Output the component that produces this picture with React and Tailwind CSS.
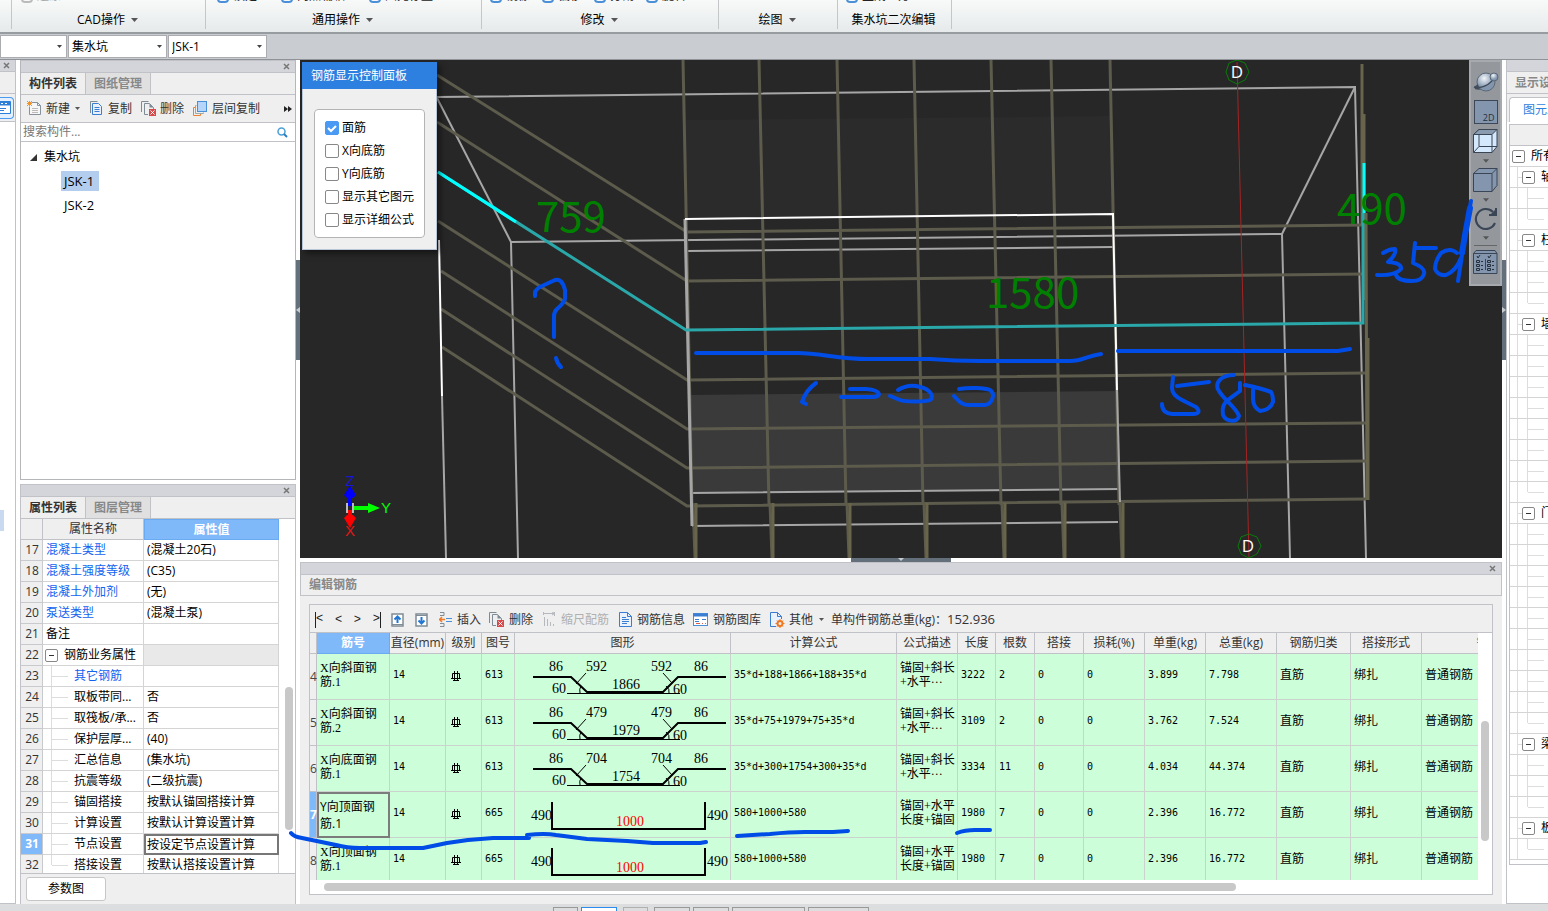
/**
 * App.jsx
 * Rebar modelling workspace: ribbon, component selectors, component and
 * property panels, 3D view, rebar editing grid and the display settings tree.
 */

const RIBBON_GROUPS = [
  { label: "", width: "w-[12px]", pad: "pl-0", tools: [] },
  { label: "CAD操作", width: "w-[194px]", pad: "pl-[9px]", tools: ["还原"], disabled: true, menu: true },
  { label: "通用操作", width: "w-[276px]", pad: "pl-[11px]", tools: ["锁定", "两点辅轴", "图元存盘"], spread: true, menu: true },
  { label: "修改", width: "w-[237px]", pad: "pl-[8px]", tools: ["镜像", "偏移", "分割", "旋转"], menu: true },
  { label: "绘图", width: "w-[119px]", pad: "pl-0", tools: [], menu: true },
  { label: "集水坑二次编辑", width: "w-[114px]", pad: "pl-[8px]", tools: ["生成土方"] },
];

const PROPERTIES = [
  { no: 17, name: "混凝土类型", value: "(混凝土20石)", link: true },
  { no: 18, name: "混凝土强度等级", value: "(C35)", link: true },
  { no: 19, name: "混凝土外加剂", value: "(无)", link: true },
  { no: 20, name: "泵送类型", value: "(混凝土泵)", link: true },
  { no: 21, name: "备注", value: "" },
  { no: 22, name: "钢筋业务属性", value: "", group: true },
  { no: 23, name: "其它钢筋", value: "", link: true, child: true },
  { no: 24, name: "取板带同...", value: "否", child: true },
  { no: 25, name: "取筏板/承...", value: "否", child: true },
  { no: 26, name: "保护层厚...", value: "(40)", child: true },
  { no: 27, name: "汇总信息", value: "(集水坑)", child: true },
  { no: 28, name: "抗震等级", value: "(二级抗震)", child: true },
  { no: 29, name: "锚固搭接", value: "按默认锚固搭接计算", child: true },
  { no: 30, name: "计算设置", value: "按默认计算设置计算", child: true },
  { no: 31, name: "节点设置", value: "按设定节点设置计算", child: true, active: true },
  { no: 32, name: "搭接设置", value: "按默认搭接设置计算", child: true, last: true },
];

const REBAR_COLUMNS = [
  { title: "", width: "w-[7px]" },
  { title: "筋号", width: "w-[73px]" },
  { title: "直径(mm)", width: "w-[56px]" },
  { title: "级别", width: "w-[36px]" },
  { title: "图号", width: "w-[33px]" },
  { title: "图形", width: "w-[216px]" },
  { title: "计算公式", width: "w-[166px]" },
  { title: "公式描述", width: "w-[61px]" },
  { title: "长度", width: "w-[38px]" },
  { title: "根数", width: "w-[39px]" },
  { title: "搭接", width: "w-[49px]" },
  { title: "损耗(%)", width: "w-[61px]" },
  { title: "单重(kg)", width: "w-[61px]" },
  { title: "总重(kg)", width: "w-[71px]" },
  { title: "钢筋归类", width: "w-[74px]" },
  { title: "搭接形式", width: "w-[71px]" },
  { title: "钢筋类型", width: "w-[158px]" },
];

const REBARS = [
  { no: 4, name: "X向斜面钢\n筋.1", shape: "613", side: "592", mid: "1866", formula: "35*d+188+1866+188+35*d", desc: "锚固+斜长\n+水平···", length: 3222, count: 2, unit: "3.899", total: "7.798" },
  { no: 5, name: "X向斜面钢\n筋.2", shape: "613", side: "479", mid: "1979", formula: "35*d+75+1979+75+35*d", desc: "锚固+斜长\n+水平···", length: 3109, count: 2, unit: "3.762", total: "7.524" },
  { no: 6, name: "X向底面钢\n筋.1", shape: "613", side: "704", mid: "1754", formula: "35*d+300+1754+300+35*d", desc: "锚固+斜长\n+水平···", length: 3334, count: 11, unit: "4.034", total: "44.374" },
  { no: 7, name: "Y向顶面钢\n筋.1", shape: "665", side: "490", mid: "1000", formula: "580+1000+580", desc: "锚固+水平\n长度+锚固", length: 1980, count: 7, unit: "2.396", total: "16.772", active: true },
  { no: 8, name: "X向顶面钢\n筋.1", shape: "665", side: "490", mid: "1000", formula: "580+1000+580", desc: "锚固+水平\n长度+锚固", length: 1980, count: 7, unit: "2.396", total: "16.772" },
];

const DISPLAY_GROUPS = [
  { name: "轴线", children: 2 },
  { name: "柱", children: 3 },
  { name: "墙", children: 8 },
  { name: "门窗洞", children: 10 },
  { name: "梁", children: 3 },
  { name: "板", children: 1 },
];

const DISPLAY_OPTIONS = [
  { label: "面筋", checked: true },
  { label: "X向底筋" },
  { label: "Y向底筋" },
  { label: "显示其它图元" },
  { label: "显示详细公式" },
];

/* ── Small shared pieces ── */

function Caret({ className = "" }) {
  return (
    <svg width="7" height="4" viewBox="0 0 7 4" className={className} aria-hidden="true">
      <path d="M0 0h7L3.5 4z" fill="#555" />
    </svg>
  );
}

function PanelBar() {
  return (
    <div className="flex h-3 shrink-0 items-center justify-end border-b border-[#c0c2c8] bg-[#d4d5da] pr-[5px]">
      <button aria-label="关闭">
        <svg width="7" height="7" viewBox="0 0 7 7">
          <path d="M1 1l5 5M6 1l-5 5" stroke="#777" strokeWidth="1.5" />
        </svg>
      </button>
    </div>
  );
}

function Tabs({ items }) {
  return (
    <div className="flex h-[22px] shrink-0 border-b border-[#c0c2c8] bg-[#efefef]" role="tablist">
      {items.map((item, i) => (
        <button
          key={item}
          role="tab"
          aria-selected={i === 0}
          className={[
            "w-[65px] border-r border-[#c0c2c8] font-bold leading-[22px]",
            i === 0 ? "text-[#333]" : "bg-[#e0e0e0] text-[#888]",
          ].join(" ")}
        >
          {item}
        </button>
      ))}
    </div>
  );
}

function Expander() {
  return (
    <button
      aria-label="折叠"
      className="flex h-[13px] w-[13px] shrink-0 items-center justify-center rounded-[2px] border border-[#888] bg-white"
    >
      <span className="h-px w-[5px] bg-[#333]" />
    </button>
  );
}

/* ── Toolbar icons ── */

function NewIcon() {
  return (
    <svg width="15" height="15" viewBox="0 0 15 15">
      <path d="M4.5 1.5h6l3 3v9h-11v-8" fill="#f7f7f7" stroke="#87929c" />
      <path d="M10.5 1.5v3h3" fill="none" stroke="#87929c" />
      <path d="M5 7.5h6M5 9.5h6M5 11.5h6" stroke="#bbb" />
      <path d="M0 0l5 5M5 0L0 5M2.500 0v5M0 2.500h5" stroke="#f0932b" />
    </svg>
  );
}

function CopyIcon() {
  return (
    <svg width="13" height="15" viewBox="0 0 13 15">
      <path d="M.5 12V.5h7" fill="none" stroke="#7f8c96" />
      <path d="M2.500 2.500h6l3 3v8h-9z" fill="#e8f1fc" stroke="#3b7dd0" />
      <path d="M4.500 6.500h5M4.500 8.500h5M4.500 10.500h5" stroke="#3b7dd0" />
    </svg>
  );
}

function DeleteIcon() {
  return (
    <svg width="15" height="15" viewBox="0 0 15 15">
      <path d="M.5 11V.5h7" fill="none" stroke="#7f8c96" />
      <path d="M7 13.500H3.500v-11h5l4 4V8" fill="none" stroke="#7f8c96" />
      <path d="M8.500 2.500v4h4z" fill="#7f8c96" />
      <rect x="8" y="8" width="7" height="7" fill="#d9484a" />
      <path d="M9.500 9.500l4 4M13.500 9.500l-4 4" stroke="#fff" />
    </svg>
  );
}

function LayerCopyIcon() {
  return (
    <svg width="15" height="15" viewBox="0 0 15 15">
      <path d="M2.500 6.500h-2v8h7v-2" fill="none" stroke="#f08030" />
      <path d="M3.500 4.500h-1v8h8v-1" fill="none" stroke="#9aa" />
      <rect x="4.500" y=".5" width="9" height="10" fill="#b5d5fb" stroke="#4a90d9" />
    </svg>
  );
}

function MoveIcon({ down }) {
  return (
    <svg width="13" height="14" viewBox="0 0 13 14">
      <rect x="1" y="1" width="11" height="12" fill="#fff" stroke="#7f8c96" strokeWidth="1.500" />
      <path d={down ? "M1 2.500h11" : "M1 11.500h11"} stroke="#7f8c96" />
      <path
        d={down ? "M6.500 4v6M3.500 7.500l3 3 3-3" : "M6.500 10V4M3.500 6.500l3-3 3 3"}
        fill="none"
        stroke="#2277d4"
        strokeWidth="2"
      />
    </svg>
  );
}

function InsertIcon() {
  return (
    <svg width="13" height="15" viewBox="0 0 13 15">
      <path d="M1 .5h4v3H1M1 14.500h4v-3H1" fill="none" stroke="#7f8c96" />
      <path d="M0 7.500h6M3 5l-2.500 2.500L3 10" fill="none" stroke="#f07820" strokeWidth="1.500" />
      <path d="M7 6.500h6M7 9.500h6" stroke="#4a90d9" />
    </svg>
  );
}

function ScaleIcon() {
  return (
    <svg width="13" height="15" viewBox="0 0 13 15">
      <path d="M1.500 5v9M4.500 7v7M7.500 10v4M10.500 12v2" stroke="#b5b8bc" />
      <path d="M1 1.500h10M11.500 0v4M.5 0v3M9 0l2.500 1.500L9 3" fill="none" stroke="#b5b8bc" />
    </svg>
  );
}

function InfoIcon() {
  return (
    <svg width="13" height="15" viewBox="0 0 13 15">
      <path d="M.5.5h8l4 4v10H.5z" fill="#eaf3fd" stroke="#3b7dd0" />
      <path d="M8.500.5v4h4M3 5.500h4M3 7.500h7M3 9.500h7M3 11.500h5" fill="none" stroke="#3b7dd0" />
    </svg>
  );
}

function LibraryIcon() {
  return (
    <svg width="15" height="13" viewBox="0 0 15 13">
      <rect x=".5" y=".5" width="14" height="12" fill="#fff" stroke="#4a90d9" />
      <path d="M0 2h15" stroke="#3b7dd0" strokeWidth="3" />
      <path d="M2 6.500h4M9 6.500h4M2 8.500h4" stroke="#3b7dd0" />
      <path d="M3 10.500h4M9 10.500h1M12 10.500h1" stroke="#e25a4a" />
    </svg>
  );
}

function OtherIcon() {
  return (
    <svg width="15" height="16" viewBox="0 0 15 16">
      <path d="M6 14.500H.5V.5h7l4 4V7" fill="#eaf3fd" stroke="#3b7dd0" />
      <path d="M7.500.5v4h4" fill="none" stroke="#3b7dd0" />
      <circle cx="10" cy="11.500" r="2.500" fill="none" stroke="#f07820" strokeWidth="2" />
      <path d="M10 7v2M10 14v2M5.500 11.500h2M12.500 11.500h2M7 8.500l1 1M13 8.500l-1 1M7 14.500l1-1M13 14.500l-1-1" stroke="#f07820" />
    </svg>
  );
}

/* ── Ribbon ── */

function Ribbon() {
  return (
    <header className="flex h-[34px] shrink-0 border-b-2 border-[#979ca1] bg-linear-to-b from-[#f8faf9] to-[#e6eaea]">
      {RIBBON_GROUPS.map((group, i) => (
        <section
          key={i}
          className={`${group.width} flex h-[29px] shrink-0 flex-col border-r border-[#c4c6c8]`}
        >
          <div
            className={[
              "flex h-[3px] items-end overflow-hidden",
              group.pad,
              group.spread ? "gap-6" : "gap-3",
            ].join(" ")}
          >
            {group.tools.map((tool) => (
              <button
                key={tool}
                className={[
                  "flex items-center gap-1 leading-[14px] whitespace-nowrap",
                  group.disabled ? "text-[#aaa]" : "text-[#222]",
                ].join(" ")}
              >
                <span
                  className={[
                    "h-[13px] w-3 rounded-sm border-2",
                    group.disabled ? "border-[#bbb]" : "border-[#4a8fd8]",
                  ].join(" ")}
                />
                {tool}
              </button>
            ))}
          </div>
          {group.label && (
            <button className="flex flex-1 items-center justify-center gap-[6px] pt-2 pr-[2px] leading-[18px] whitespace-nowrap text-black">
              {group.label}
              {group.menu && <Caret />}
            </button>
          )}
        </section>
      ))}
    </header>
  );
}

function Combo({ label, value, width }) {
  return (
    <label className={`relative ${width}`}>
      <select
        aria-label={label}
        className="h-[23px] w-full appearance-none border border-[#aaacb0] bg-white pl-[3px] leading-[20px] text-black"
      >
        <option>{value}</option>
      </select>
      <svg width="5" height="3" viewBox="0 0 5 3" className="pointer-events-none absolute top-[10px] right-[5px]">
        <path d="M0 0h5L2.500 3z" fill="#444" />
      </svg>
    </label>
  );
}

/* ── Left side ── */

function NavStrip() {
  return (
    <aside className="mr-1 flex w-4 shrink-0 flex-col border-r border-b border-[#c0c2c8] bg-white">
      <PanelBar />
      <div className="h-[22px] border-b border-[#c0c2c8] bg-[#efefef]" />
      <div className="flex h-7 items-center border-b border-[#c0c2c8] bg-[#efefef]">
        <button aria-label="导航" className="flex h-[22px] w-[14px] items-center rounded-r border border-l-0 border-[#4a9af0] bg-[#e4f0fd]">
          <svg width="11" height="13" viewBox="0 0 11 13">
            <path d="M0 .5h10.500v12H0" fill="#fff" stroke="#2f7fd8" />
            <path d="M0 2.500h10" stroke="#2f7fd8" strokeWidth="4" />
            <path d="M1 2.500h2M5 2.500h2" stroke="#fff" />
            <path d="M0 7.500h6M0 9.500h4" stroke="#2f7fd8" />
          </svg>
        </button>
      </div>
      <div className="mt-[388px] h-[21px] w-1 bg-[#c9d9f0]" />
    </aside>
  );
}

function ComponentPanel() {
  return (
    <section className="flex h-[420px] shrink-0 flex-col border border-[#b4b6ba] border-t-[#c0c2c8] bg-white">
      <PanelBar />
      <Tabs items={["构件列表", "图纸管理"]} />
      <div className="flex h-7 shrink-0 items-center border-b border-[#c0c2c8] bg-[#efefef] pl-[6px] text-[#333]">
        <button className="flex items-center gap-1"><NewIcon />新建</button>
        <Caret className="ml-[5px] h-[3px] w-[5px]" />
        <button className="ml-[10px] flex items-center gap-[5px]"><CopyIcon />复制</button>
        <button className="ml-[9px] flex items-center gap-1"><DeleteIcon />删除</button>
        <button className="ml-[9px] flex items-center gap-1"><LayerCopyIcon />层间复制</button>
        <button aria-label="更多" className="mr-[3px] ml-auto">
          <svg width="8" height="6" viewBox="0 0 8 6">
            <path d="M0 0l4 3-4 3zM4 0l4 3-4 3z" fill="#222" />
          </svg>
        </button>
      </div>
      <label className="flex h-[19px] shrink-0 items-center border-b border-[#c0c2c8] pr-[7px]">
        <input
          type="text"
          aria-label="搜索构件"
          placeholder="搜索构件..."
          className="min-w-0 flex-1 pl-[2px] leading-[18px] outline-none placeholder:text-[#777]"
        />
        <svg width="11" height="11" viewBox="0 0 11 11">
          <circle cx="4.500" cy="4.500" r="3.500" fill="none" stroke="#4b9fd8" strokeWidth="1.500" />
          <path d="M7 7l3 3" stroke="#2b7fc0" strokeWidth="2" />
        </svg>
      </label>
      <ul className="pt-[3px] leading-6 text-black">
        <li>
          <div className="flex items-center gap-[7px] pl-[9px]">
            <svg width="7" height="7" viewBox="0 0 7 7">
              <path d="M7 0v7H0z" fill="#333" />
            </svg>
            集水坑
          </div>
          <ul className="flex flex-col items-start pl-10 text-[13px]">
            <li className="my-[2px] bg-[#b3cdee] pr-[5px] pl-[3px] leading-5">JSK-1</li>
            <li className="px-[3px]">JSK-2</li>
          </ul>
        </li>
      </ul>
    </section>
  );
}

function PropertyPanel() {
  return (
    <section className="mt-1 flex min-h-0 flex-1 flex-col border border-b-0 border-[#c0c2c8] bg-[#efefef]">
      <PanelBar />
      <Tabs items={["属性列表", "图层管理"]} />
      <div className="flex min-h-0 flex-1 overflow-hidden border-b border-[#c0c2c8] bg-white">
        <table className="h-0 w-[258px] table-fixed border-separate border-spacing-0">
          <thead>
            <tr className="h-[21px] text-[#333]">
              <th className="w-[22px] border-r border-b border-[#c0c2c8] bg-[#efefef]" />
              <th className="w-[101px] border-r border-b border-[#c0c2c8] bg-[#efefef] leading-5 font-normal">属性名称</th>
              <th className="border border-[#6aaaf0] bg-[#80b9fa] leading-[19px] font-bold text-white">属性值</th>
            </tr>
          </thead>
          <tbody>
            {PROPERTIES.map((row) => (
              <tr key={row.no} className="h-[21px]">
                <td
                  className={[
                    "border-r border-b border-[#c8cacd] pl-[1px] text-center leading-5",
                    row.active ? "bg-[#80b9fa] font-bold text-white" : "bg-[#efefef] text-[#333]",
                  ].join(" ")}
                >
                  {row.no}
                </td>
                <td className="overflow-hidden border-r border-b border-[#d4d4d4] leading-5 whitespace-nowrap">
                  <div
                    className={[
                      "flex h-5 items-center",
                      row.link ? "text-[#1263f0]" : "text-black",
                      row.group ? "gap-[6px] pl-[2px]" : row.child ? "pl-2" : "pl-[3px]",
                    ].join(" ")}
                  >
                    {row.group && <Expander />}
                    {row.child && (
                      <span className="flex h-5 w-[23px] shrink-0 items-center">
                        <span className={row.last ? "h-[10px] w-px self-start bg-[#ddd]" : "h-5 w-px bg-[#ddd]"} />
                        <span className="h-px w-4 bg-[#ddd]" />
                      </span>
                    )}
                    {row.name}
                  </div>
                </td>
                <td
                  className={[
                    "whitespace-nowrap text-black",
                    row.group ? "bg-[#e9e9e9]" : "",
                    row.active
                      ? "border-2 border-[#777] pl-px leading-[17px]"
                      : "border-r border-b border-[#d4d4d4] pl-[3px] leading-5",
                  ].join(" ")}
                >
                  {row.value}
                </td>
              </tr>
            ))}
          </tbody>
        </table>
        <div className="flex-1 pt-[168px] pl-[6px]">
          <div className="h-[143px] w-2 rounded bg-[#c8c8c8]" />
        </div>
      </div>
      <div className="flex h-[30px] shrink-0 items-center pl-[5px]">
        <button className="h-6 w-20 rounded-[3px] border border-[#c4c6c8] bg-white leading-[22px] text-black">参数图</button>
      </div>
    </section>
  );
}

function Splitter({ flip }) {
  return (
    <div className="flex w-1 shrink-0 flex-col bg-white pt-[200px]">
      <div className="flex h-[100px] w-[5px] items-center bg-[#63707c]">
        <svg width="4" height="6" viewBox="0 0 4 6">
          <path d={flip ? "M0 0l4 3-4 3z" : "M4 0L0 3l4 3z"} fill="#c8ccd0" />
        </svg>
      </div>
    </div>
  );
}

/* ── 3D view ── */

const BAR_COLUMNS = [
  [683, 692], [759, 769], [837, 846], [914, 923], [991, 1001], [1051, 1061], [1110, 1119],
];

const BAR_ROWS = [
  [437, 75, 232, 225],
  [437, 122, 281, 274],
  [438, 221, 380, 373],
  [441, 271, 429, 423],
  [441, 309, 468, 461],
  [442, 347, 506, 499],
];

function Scene() {
  return (
    <svg
      className="block h-full w-full bg-[#272727]"
      viewBox="300 60 1202 498"
      preserveAspectRatio="xMinYMin slice"
      aria-label="三维视图"
    >
      <path d="M684 120L1113 116L1115 214L686 219z" fill="#2b2b2b" />
      <path d="M689 395L1117 391L1120 489L691 493z" fill="#3a3a3a" />

      {/* pit outline */}
      <g fill="none" stroke="#a6a6a6" strokeWidth="2">
        <path d="M437 97L1355 87L1366 558" />
        <path d="M437 98L511 242L518 558" />
        <path d="M511 242L1282 234L1290 558" />
        <path d="M1355 87L1282 234" />
        <path d="M442 396L446 558" />
        <path d="M687 251L1113 247M691 493L1120 489M692 526L1118 522" />
      </g>

      {/* rebar mesh */}
      <g fill="none" stroke="#5d5b4c" strokeWidth="3">
        {BAR_COLUMNS.map(([top, bottom]) => (
          <path key={top} d={`M${top} 60L${bottom} 505`} />
        ))}
        {BAR_ROWS.map(([x, y, left, right]) => (
          <path key={y} d={`M${x} ${y}L687 ${left}L1366 ${right}`} />
        ))}
      </g>
      {BAR_COLUMNS.map(([top, bottom]) => (
        <g key={top} strokeWidth="3">
          <path d={`M${bottom + 1} 503L${bottom + 3} 558`} stroke="#5d5b4c" />
          <path d={`M${bottom + 4} 503V558`} stroke="#68654a" />
        </g>
      ))}
      <g fill="none" stroke="#68654c" strokeWidth="3">
        <path d="M1362 64V225M1364 114V300" />
        <path d="M1366 213L1367 500M1368 338V500" />
      </g>

      {/* pit edges in front of the mesh */}
      <path d="M685 219L692 526" stroke="#a6a6a6" strokeWidth="3" />
      <path d="M1117 390L1120 502" stroke="#a6a6a6" strokeWidth="2" />
      <path d="M685 219L1113 214L1117 390M439 240L442 396" fill="none" stroke="#fff" strokeWidth="2" />

      {/* grid axis */}
      <path d="M1237 62L1249 557" stroke="#a52424" />
      <g fill="none" stroke="#0a7a0a">
        <path d="M1237 60l8 3 4 9-4 8-8 4-8-4-3-8 3-9z" />
        <path d="M1249 534l8 3 4 9-4 8-8 4-8-4-3-8 3-9z" />
      </g>
      <g className="font-['Open_Sans',sans-serif] text-[17px]" fill="#fff" textAnchor="middle">
        <text x="1237" y="78">D</text>
        <text x="1248" y="552">D</text>
      </g>

      {/* selected bar */}
      <path d="M438 172L686 330L1363 323V213" fill="none" stroke="#2aa7a9" strokeWidth="3" />
      <path d="M438 172L516 222M1364 163V213" stroke="#00ffff" strokeWidth="3" />

      <g className="font-['Noto_Sans_CJK_SC',sans-serif] text-[42px]" fill="#008000">
        <text x="536" y="232">759</text>
        <text x="986" y="308">1580</text>
        <text x="1337" y="224">490</text>
      </g>

      {/* orientation gizmo */}
      <rect x="347" y="504" width="6" height="8" fill="none" stroke="#bbb" strokeWidth="2" />
      <path d="M350 506V495" stroke="#00f" strokeWidth="4" />
      <path d="M350 486l6 9-3 3h-6l-3-3z" fill="#00f" />
      <path d="M354 508H370" stroke="#0f0" strokeWidth="4" />
      <path d="M368 503l12 5-12 5z" fill="#0f0" />
      <path d="M350 510V518" stroke="#f00" strokeWidth="4" />
      <path d="M350 528l6-10-3-3h-6l-3 3z" fill="#f00" />
      <g className="font-['Liberation_Sans',sans-serif] text-[15px]" textAnchor="middle">
        <text x="350" y="486" fill="#1616d8">Z</text>
        <text x="386" y="513" fill="#0f0">Y</text>
        <text x="350" y="536" fill="#e01818">X</text>
      </g>
    </svg>
  );
}

function RebarDisplayDialog() {
  return (
    <div
      role="dialog"
      aria-label="钢筋显示控制面板"
      className="absolute top-[2px] left-[2px] w-[135px] border border-[#b8c4d8] bg-[#efefef] shadow-[3px_3px_6px_rgba(0,0,0,0.5)]"
    >
      <h2 className="-mx-px -mt-px h-[27px] bg-[#2d7fe0] pl-[9px] leading-7 text-white">钢筋显示控制面板</h2>
      <fieldset className="mx-[11px] mt-5 mb-[11px] flex flex-col rounded border border-[#b4b4b4] bg-white py-[6px] pl-[10px]">
        {DISPLAY_OPTIONS.map((option) => (
          <label key={option.label} className="flex h-[23px] items-center gap-[3px] whitespace-nowrap text-black">
            <span className="relative flex">
              <input
                type="checkbox"
                defaultChecked={option.checked}
                className="h-[14px] w-[14px] appearance-none rounded-[2px] border border-[#888] bg-white checked:border-[#4a9af4] checked:bg-[#4a9af4]"
              />
              {option.checked && (
                <svg width="14" height="14" viewBox="0 0 14 14" className="pointer-events-none absolute inset-0">
                  <path d="M3 7l3 3 5-5" fill="none" stroke="#fff" strokeWidth="2" />
                </svg>
              )}
            </span>
            {option.label}
          </label>
        ))}
      </fieldset>
    </div>
  );
}

function ViewToolbar() {
  return (
    <div className="absolute top-0 right-0 flex w-[33px] flex-col items-center border-2 border-[#a6a9ad] bg-[#94979c] pt-[7px] pb-[10px]">
      <button aria-label="动态观察">
        <svg width="26" height="26" viewBox="0 0 26 26">
          <defs>
            <radialGradient id="orb" cx="40%" cy="30%">
              <stop offset="0%" stopColor="#f2f6fa" />
              <stop offset="100%" stopColor="#8296ae" />
            </radialGradient>
          </defs>
          <path d="M2 19C8 21 17 18 22 9" fill="none" stroke="#444f5e" strokeWidth="2" />
          <circle cx="13" cy="13" r="9" fill="url(#orb)" stroke="#5a6878" />
          <path d="M1 18C8 20 17 16 21 9" fill="none" stroke="#3f4a58" strokeWidth="1.500" />
          <circle cx="21" cy="8" r="4" fill="url(#orb)" stroke="#5a6878" />
          <path d="M1 18l4-3 1 4z" fill="#444f5e" />
        </svg>
      </button>
      <button aria-label="二维视图" className="mt-[5px] flex h-6 w-6 items-end justify-end border border-[#3c4858] bg-[#8496ae] pr-[2px] text-[9px] leading-[10px] text-[#26303c]">
        2D
      </button>
      <button aria-label="线框" className="mt-[5px]">
        <svg width="25" height="24" viewBox="0 0 25 24">
          <path d="M.5 5.500L6 .5h18v17l-5 6H.5z" fill="#d5e9fd" stroke="#3a4656" />
          <path d="M.5 5.500L6 .5h18l-5 5z" fill="#8a9bb0" stroke="#3a4656" />
          <path d="M19 5.500v18M6 5.500v12h13M.5 23.500l5.500-6M19 17.500l5 0" fill="none" stroke="#3a4656" />
        </svg>
      </button>
      <Caret className="mt-[6px] h-[4px] w-[6px]" />
      <button aria-label="实体" className="mt-[5px]">
        <svg width="25" height="24" viewBox="0 0 25 24">
          <path d="M.5 5.500L6 .5h18v17l-5 6H.5zM.5 5.500H19v18M19 5.500l5-5" fill="#8496ae" stroke="#3a4656" />
        </svg>
      </button>
      <Caret className="mt-[6px] h-[4px] w-[6px]" />
      <button aria-label="旋转" className="mt-[5px]">
        <svg width="24" height="24" viewBox="0 0 24 24">
          <path d="M21 16A10 10 0 1 1 19 5" fill="none" stroke="#3a4656" strokeWidth="2" />
          <path d="M22 1v7h-7" fill="none" stroke="#3a4656" strokeWidth="2" />
          <path d="M22 2v6h-6z" fill="#3a4656" />
        </svg>
      </button>
      <Caret className="mt-[5px] h-[4px] w-[6px]" />
      <div className="mt-[5px] h-px w-[23px] bg-[#666]" />
      <button aria-label="显示设置" className="mt-[4px]">
        <svg width="25" height="24" viewBox="0 0 25 24">
          <path d="M.5 3.500L3 .5h19l2 3v20H.5z" fill="#8496ae" stroke="#3a4656" />
          <path d="M.5 3.500h23.500M12.500 9v11" stroke="#3a4656" />
          <path d="M4 6l1 2 2-3M15 6l1 2 2-3" fill="none" stroke="#26303c" />
          <path d="M3.500 10.500h3v2h-3zM3.500 14.500h3v2h-3zM3.500 18.500h3v2h-3zM14.500 10.500h3v2h-3zM14.500 14.500h3v2h-3zM14.500 18.500h3v2h-3z" fill="none" stroke="#26303c" />
          <path d="M8 11.500h2M8 15.500h2M8 19.500h2M19 11.500h2M19 15.500h2M19 19.500h2" stroke="#26303c" />
        </svg>
      </button>
    </div>
  );
}

/* ── Rebar grid ── */

function ShapeDrawing({ bar }) {
  if (bar.shape === "613") {
    return (
      <svg width="215" height="45" viewBox="0 0 215 45" className="block font-['Liberation_Serif',serif] text-[14px]">
        <path d="M18 23H56L72 38H148L163 23H211" fill="none" stroke="#000" strokeWidth="2" />
        <path d="M52 39.500H165M71 19L61 30M148 19L157 29M66 32q-2 3-1 7M151 32q4 3 3 7" fill="none" stroke="#000" />
        <text x="34" y="17">86</text>
        <text x="71" y="17">{bar.side}</text>
        <text x="136" y="17">{bar.side}</text>
        <text x="179" y="17">86</text>
        <text x="97" y="35">{bar.mid}</text>
        <text x="37" y="39">60</text>
        <text x="158" y="40">60</text>
      </svg>
    );
  }
  return (
    <svg width="215" height="45" viewBox="0 0 215 45" className="block font-['Liberation_Serif',serif] text-[14px]">
      <path d="M37 10V37H190V10" fill="none" stroke="#000" strokeWidth="2" />
      <text x="16" y="28">{bar.side}</text>
      <text x="192" y="28">{bar.side}</text>
      <text x="101" y="34" fill="#f00">{bar.mid}</text>
    </svg>
  );
}

function GradeSymbol() {
  return (
    <svg width="10" height="11" viewBox="0 0 10 11" aria-label="HRB400">
      <path d="M1.500 2.500h7v5h-7zM3.500 0v10M6.500 0v10M0 7.500h10M2 9.500h6" fill="none" stroke="#000" />
    </svg>
  );
}

function RebarTable() {
  const cell = "border-r border-b border-[#ccd3cf] pb-[3px] pl-[3px] whitespace-pre";
  const numeric = `${cell} font-['DejaVu_Sans_Mono',monospace] text-[10px]`;

  return (
    <table className="w-[1270px] table-fixed border-separate border-spacing-0">
      <thead>
        <tr className="h-[21px]">
          {REBAR_COLUMNS.map((column, i) => (
            <th
              key={i}
              className={[
                column.width,
                "border-r border-b leading-5 whitespace-nowrap",
                i === 1
                  ? "border-[#6aaaf0] bg-[#80b9fa] font-bold text-white"
                  : "border-[#c0c2c8] bg-[#efefef] font-normal text-[#333]",
              ].join(" ")}
            >
              {column.title}
            </th>
          ))}
        </tr>
      </thead>
      <tbody className="font-['Liberation_Serif','Noto_Sans_CJK_SC',serif] leading-[14px] text-black">
        {REBARS.map((bar) => (
          <tr key={bar.no} className="h-[46px] bg-[#ccffd9]">
            <td
              className={[
                "border-r border-b border-[#c0c2c8] font-['Open_Sans',sans-serif]",
                bar.active ? "bg-[#80b9fa] font-bold text-white" : "bg-[#efefef] text-[#444]",
              ].join(" ")}
            >
              {bar.no}
            </td>
            <td
              className={
                bar.active
                  ? "border-2 border-[#7c7c7c] pl-px font-['Open_Sans','Noto_Sans_CJK_SC',sans-serif] leading-[17px] whitespace-pre"
                  : cell
              }
            >
              {bar.name}
            </td>
            <td className={numeric}>14</td>
            <td className="border-r border-b border-[#ccd3cf] pl-[5px]"><GradeSymbol /></td>
            <td className={numeric}>{bar.shape}</td>
            <td className="border-r border-b border-[#ccd3cf] p-0"><ShapeDrawing bar={bar} /></td>
            <td className={numeric}>{bar.formula}</td>
            <td className={cell}>{bar.desc}</td>
            <td className={numeric}>{bar.length}</td>
            <td className={numeric}>{bar.count}</td>
            <td className={numeric}>0</td>
            <td className={numeric}>0</td>
            <td className={numeric}>{bar.unit}</td>
            <td className={numeric}>{bar.total}</td>
            <td className={cell}>直筋</td>
            <td className={cell}>绑扎</td>
            <td className={cell}>普通钢筋</td>
          </tr>
        ))}
      </tbody>
    </table>
  );
}

function RebarPanel() {
  return (
    <section className="flex h-[342px] shrink-0 flex-col bg-[#efefef]">
      <div className="border border-[#c0c2c8]">
        <PanelBar />
        <h2 className="h-5 pl-2 leading-5 font-bold text-[#888]">编辑钢筋</h2>
      </div>
      <div className="mx-[9px] mt-2 mb-[9px] flex min-h-0 flex-1 flex-col border border-[#c0c2c8]">
        <div className="flex h-7 shrink-0 items-center border-b border-[#c0c2c8] pt-[2px] pl-[5px] text-[#333]">
          <div className="flex w-[66px] justify-between font-['Liberation_Mono',monospace] text-[#222]">
            <button aria-label="首行" className="border-l border-[#222] leading-[13px]">&lt;</button>
            <button aria-label="上一行">&lt;</button>
            <button aria-label="下一行">&gt;</button>
            <button aria-label="末行" className="border-r border-[#222] leading-[13px]">&gt;</button>
          </div>
          <button aria-label="上移" className="ml-[10px]"><MoveIcon /></button>
          <button aria-label="下移" className="ml-[11px]"><MoveIcon down /></button>
          <button className="ml-[11px] flex items-center gap-[5px]"><InsertIcon />插入</button>
          <button className="ml-2 flex items-center gap-[5px]"><DeleteIcon />删除</button>
          <button disabled className="ml-[10px] flex items-center gap-[5px] text-[#b0b0b0]"><ScaleIcon />缩尺配筋</button>
          <button className="ml-[10px] flex items-center gap-[5px]"><InfoIcon />钢筋信息</button>
          <button className="ml-2 flex items-center gap-[5px]"><LibraryIcon />钢筋图库</button>
          <button className="ml-[9px] flex items-center gap-1"><OtherIcon />其他</button>
          <Caret className="mr-[7px] ml-[6px] h-[3px] w-[5px]" />
          <span className="whitespace-nowrap">
            单构件钢筋总重(kg)：<span className="text-[13px]">152.936</span>
          </span>
        </div>
        <div className="flex min-h-0 flex-1 bg-white">
          <div className="flex min-w-0 flex-1 flex-col">
            <div className="min-h-0 flex-1 overflow-hidden">
              <RebarTable />
            </div>
            <div className="h-[14px] shrink-0 pt-[3px] pl-[14px]">
              <div className="h-2 w-[79%] rounded bg-[#c8c8c8]" />
            </div>
          </div>
          <div className="w-[14px] shrink-0 pt-[88px] pl-[3px]">
            <div className="h-[120px] w-2 rounded bg-[#c8c8c8]" />
          </div>
        </div>
      </div>
    </section>
  );
}

/* ── Display settings tree ── */

function DisplayPanel() {
  return (
    <aside className="flex w-[42px] shrink-0 flex-col overflow-hidden border-b border-l border-[#c0c2c8] bg-white whitespace-nowrap">
      <div className="h-3 shrink-0 border-b border-[#c0c2c8] bg-[#d4d5da]" />
      <h2 className="h-[22px] shrink-0 border-b border-[#c0c2c8] bg-[#efefef] pl-2 leading-[21px] font-bold text-[#888]">显示设置</h2>
      <div className="flex h-7 shrink-0 bg-[#efefef] pt-[3px] pl-[2px]">
        <button className="rounded-tl border-t border-l border-[#c0c2c8] bg-white px-[13px] leading-6 text-[#2d7fe0]">图元显示</button>
      </div>
      <div className="mt-[2px] ml-[2px] w-[120px] shrink-0 border border-[#c0c2c8] pb-[4px]">
        <div className="h-[21px] border-b border-[#c0c2c8] bg-[#efefef]" />
        <ul className="leading-[22px] text-black">
          <li className="flex h-[21px] items-center gap-[6px] border-b border-[#d4d4d4] pl-[2px]">
            <Expander />
            所有构件
          </li>
          {DISPLAY_GROUPS.map((group) => (
            <li key={group.name}>
              <div className="flex h-[21px] items-center border-b border-[#d4d4d4] pl-[7px]">
                <span className="h-5 w-px bg-[#ddd]" />
                <span className="h-px w-1 bg-[#ddd]" />
                <Expander />
                <span className="ml-[6px]">{group.name}</span>
              </div>
              {Array.from({ length: group.children }, (_, i) => (
                <div key={i} className="flex h-[21px] items-center border-b border-[#d4d4d4] pl-[7px]">
                  <span className="h-5 w-px bg-[#ddd]" />
                  <span
                    className={[
                      "ml-[9px] w-px bg-[#ddd]",
                      i === group.children - 1 ? "h-[10px] self-start" : "h-5",
                    ].join(" ")}
                  />
                  <span className="h-px w-4 bg-[#ddd]" />
                </div>
              ))}
            </li>
          ))}
        </ul>
      </div>
    </aside>
  );
}

/* ── Handwritten notes over the workspace ── */

function InkLayer() {
  return (
    <svg
      className="pointer-events-none absolute inset-0 h-full w-full"
      fill="none"
      stroke="#004ce6"
      strokeWidth="4"
      strokeLinecap="round"
      strokeLinejoin="round"
      aria-hidden="true"
    >
      <path d="M535 296V292Q537 288 542 286L555 280Q562 278 565 290V299Q564 303 557 309Q554 312 554 316V337M556 358Q557 363 561 367" />
      <path d="M696 353H798C820 353 838 359 868 359H930Q955 361 980 361H1070C1083 361 1086 356 1101 354" />
      <path d="M816 383Q806 390 802 402L806 404" />
      <path d="M850 389H866Q878 390 879 394Q878 397 873 397H841" />
      <path d="M898 390C906 385 914 385 920 387C930 389 935 397 930 400C925 402 905 402 900 400L890 396" />
      <path d="M959 389C970 387 985 388 990 390C996 394 992 404 985 405H968C961 405 958 400 954 396" />
      <path d="M1118 351H1338L1350 349" />
      <path d="M1173 377L1172 388Q1172 395 1182 400L1196 407Q1202 413 1194 414H1172Q1162 413 1162 404M1177 386L1209 382" />
      <path d="M1234 375C1220 375 1214 384 1219 391C1224 400 1236 407 1239 416C1238 423 1226 422 1223 415C1221 402 1228 400 1240 391V383" />
      <path d="M1245 385Q1260 388 1271 392Q1273 395 1273 402Q1270 410 1260 411Q1253 407 1253 399V390" />
      <path d="M1383 253Q1389 249 1395 249Q1397 254 1388 262Q1402 263 1401 269Q1395 276 1377 275" />
      <path d="M1415 243L1413 263Q1426 268 1424 274Q1422 281 1412 281Q1398 281 1396 275M1415 248H1436" />
      <path d="M1457 253Q1450 247 1441 253Q1435 261 1435 269Q1438 276 1446 275Q1456 271 1461 258" />
      <path d="M1471 201L1465 235L1461 262L1458 281" />
      <path d="M1470 208L1465 235L1462 253" strokeWidth="6" />
      <path d="M291 833Q294 837 302 838L336 845Q347 848 360 848H423L447 843L468 840L493 838H529V835H527Q545 833 556 835L587 839L627 841L653 843H700L706 842" />
      <path d="M737 836L770 834Q790 832 805 832H833L848 831" />
      <path d="M957 833Q965 830 975 830H990" />
    </svg>
  );
}

/* ── Bottom tab strip ── */

const FOOTER_BUTTONS = [
  "w-[25px] mr-[3px] border-[#999]",
  "w-[36px] mr-[6px] border-[#2b8cf0] bg-white",
  "w-[25px] mr-[6px] border-[#b0b0b0]",
  "w-[36px] mr-[3px] border-[#999]",
  "w-[36px] mr-[3px] border-[#999]",
  "w-[73px] mr-[3px] border-[#999]",
  "w-[61px] border-[#999]",
];

function Footer() {
  return (
    <footer className="flex h-[7px] shrink-0 overflow-hidden bg-[#dcdddf] pt-[3px] pl-[553px]">
      {FOOTER_BUTTONS.map((style, i) => (
        <button key={i} aria-label={`状态 ${i + 1}`} className={`h-5 shrink-0 border ${style}`} />
      ))}
    </footer>
  );
}

export default function App() {
  return (
    <div className="relative flex h-screen min-h-[700px] flex-col overflow-hidden bg-white font-['Open_Sans','Noto_Sans_CJK_SC',sans-serif] text-xs leading-4">
      <Ribbon />
      <div className="flex h-[26px] shrink-0 items-center gap-px border-b border-[#8f9297] bg-[#c9ccd1]">
        <Combo label="楼层" value="" width="w-[67px]" />
        <Combo label="构件类型" value="集水坑" width="w-[99px]" />
        <Combo label="构件" value="JSK-1" width="w-[99px]" />
      </div>

      <div className="flex min-h-0 flex-1">
        <NavStrip />
        <div className="flex w-[276px] shrink-0 flex-col">
          <ComponentPanel />
          <PropertyPanel />
        </div>
        <Splitter />
        <main className="flex min-w-0 flex-1 flex-col">
          <div className="relative min-h-0 flex-1 overflow-hidden">
            <Scene />
            <RebarDisplayDialog />
            <ViewToolbar />
          </div>
          <div className="flex h-1 shrink-0 justify-center">
            <div className="flex w-[100px] justify-center bg-[#63707c]">
              <svg width="6" height="3" viewBox="0 0 6 3">
                <path d="M0 0h6L3 3z" fill="#c8ccd0" />
              </svg>
            </div>
          </div>
          <RebarPanel />
        </main>
        <Splitter flip />
        <DisplayPanel />
      </div>

      <Footer />
      <InkLayer />
    </div>
  );
}
